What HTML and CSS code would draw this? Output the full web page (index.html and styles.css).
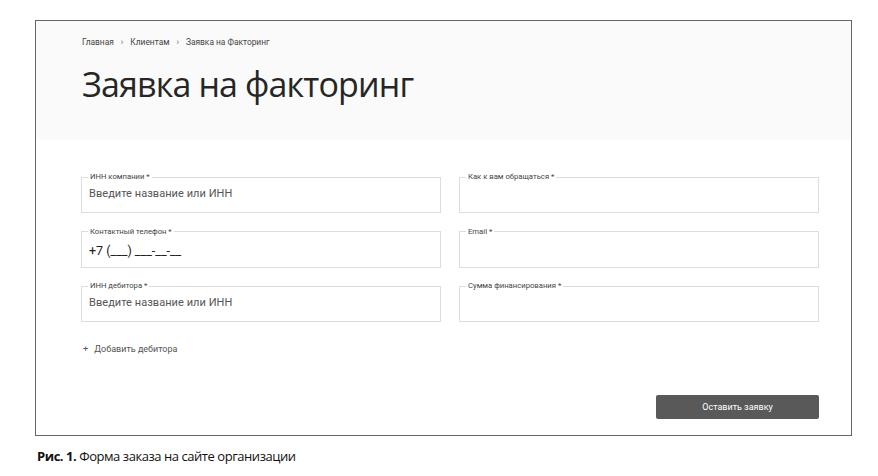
FILE: index.html
```html
<!DOCTYPE html>
<html lang="ru">
  <head>
    <meta charset="UTF-8" />
    <title>Заявка на факторинг</title>
    <link rel="stylesheet" href="styles.css">
  </head>
  <body>
    <div class="figure">
      <div class="page-head">
        <nav class="crumbs">
          <span>Главная</span>
          <span class="sep">›</span>
          <span>Клиентам</span>
          <span class="sep">›</span>
          <span>Заявка на Факторинг</span>
        </nav>
        <h1>Заявка на факторинг</h1>
      </div>

      <form class="order-form">
        <div class="fields">
          <fieldset class="field">
            <legend>ИНН компании *</legend>
            <input type="text" placeholder="Введите название или ИНН" />
          </fieldset>
          <fieldset class="field">
            <legend>Как к вам обращаться *</legend>
            <input type="text" />
          </fieldset>
          <fieldset class="field">
            <legend>Контактный телефон *</legend>
            <input type="text" class="phone" value="+7 (___) ___-__-__" />
          </fieldset>
          <fieldset class="field">
            <legend>Email *</legend>
            <input type="text" />
          </fieldset>
          <fieldset class="field">
            <legend>ИНН дебитора *</legend>
            <input type="text" placeholder="Введите название или ИНН" />
          </fieldset>
          <fieldset class="field">
            <legend>Сумма финансирования *</legend>
            <input type="text" />
          </fieldset>
        </div>

        <div class="add-debtor"><span class="plus">+</span> Добавить дебитора</div>

        <div class="form-actions">
          <button type="button" class="submit">Оставить заявку</button>
        </div>
      </form>
    </div>

    <p class="caption"><b>Рис. 1.</b> Форма заказа на сайте организации</p>
  </body>
</html>
```

FILE: styles.css
```css
body {
  margin: 0;
  background: #fff;
  font-family: Roboto, "Liberation Sans", sans-serif;
  color: #333;
}

.figure {
  width: 815px;
  height: 414px;
  margin: 20px 0 0 35px;
  border: 1px solid #666;
  display: flex;
  flex-direction: column;
}

.page-head {
  background: #fafafa;
  height: 119px;
  padding: 0 0 0 46px;
  box-sizing: border-box;
}

.crumbs {
  padding-top: 16px;
  font-size: 8.4px;
  line-height: 10px;
  color: #444;
  display: flex;
  gap: 7px;
}

.crumbs .sep {
  color: #666;
}

.page-head h1 {
  margin: 17px 0 0;
  font-family: "Open Sans", sans-serif;
  font-weight: 400;
  font-size: 34px;
  line-height: 40px;
  color: #262626;
  letter-spacing: -0.85px;
}

.order-form {
  flex: 1;
  padding: 33px 0 0 45px;
  display: flex;
  flex-direction: column;
}

.fields {
  display: grid;
  grid-template-columns: 360px 360px;
  column-gap: 18px;
  grid-template-rows: 40px 40px 40px;
  row-gap: 14.5px;
}

.field {
  margin: 0;
  padding: 0 6px;
  border: 1px solid #ddd;
  height: 40px;
  box-sizing: border-box;
  min-width: 0;
}

.field legend {
  padding: 0 2px;
  font-size: 7.7px;
  line-height: 8px;
  color: #444;
}

.field input {
  display: block;
  width: 100%;
  box-sizing: border-box;
  border: none;
  outline: none;
  background: transparent;
  margin: 6px 0 0;
  padding: 0 1px;
  font-family: Roboto, sans-serif;
  font-size: 11px;
  letter-spacing: 0.05px;
  line-height: 14px;
  color: #333;
}

.field input::placeholder {
  color: #555;
  opacity: 1;
}

.field input.phone {
  margin-top: 8px;
  font-size: 12.5px;
  color: #222;
  letter-spacing: 0;
}

.add-debtor {
  margin: 22px 0 0 2px;
  font-size: 9px;
  color: #555;
}

.add-debtor .plus {
  margin-right: 4px;
}

.form-actions {
  display: flex;
  justify-content: flex-end;
  padding: 41px 32px 0 0;
}

.submit {
  width: 163px;
  height: 24px;
  background: #595959;
  border: none;
  border-radius: 2px;
  color: #fff;
  font-family: Roboto, sans-serif;
  font-size: 9px;
  cursor: pointer;
}

.caption {
  margin: 11px 0 0 37px;
  font-family: "Open Sans", sans-serif;
  font-size: 13px;
  letter-spacing: -0.45px;
  color: #111;
}

.caption b {
  font-weight: 700;
}
```
